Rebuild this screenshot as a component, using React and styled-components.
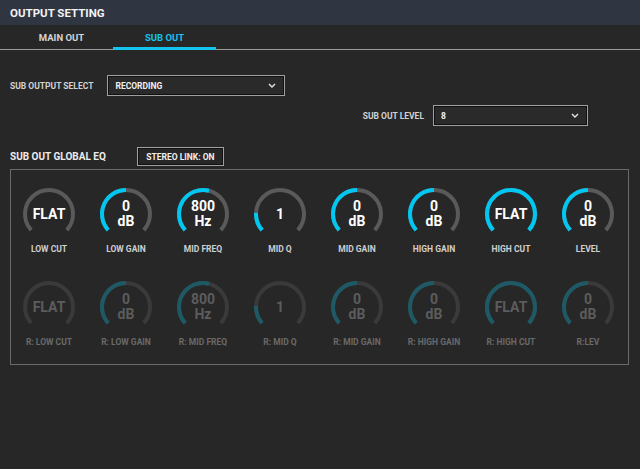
import React from 'react'
import styled, { createGlobalStyle } from 'styled-components'

const GlobalStyle = createGlobalStyle`
  html, body {
    margin: 0;
    padding: 0;
    background: #272727;
    font-family: "Roboto", "Liberation Sans", sans-serif;
    font-weight: bold;
    color: #e6e6e6;
  }
`

const row1 = [
  { label: 'LOW CUT', top: 'FLAT', value: 0 },
  { label: 'LOW GAIN', top: '0', bottom: 'dB', value: 0.5 },
  { label: 'MID FREQ', top: '800', bottom: 'Hz', value: 0.555 },
  { label: 'MID Q', top: '1', value: 0.17 },
  { label: 'MID GAIN', top: '0', bottom: 'dB', value: 0.5 },
  { label: 'HIGH GAIN', top: '0', bottom: 'dB', value: 0.5 },
  { label: 'HIGH CUT', top: 'FLAT', value: 1 },
  { label: 'LEVEL', top: '0', bottom: 'dB', value: 0.5 },
]

const row2 = [
  { label: 'R: LOW CUT', top: 'FLAT', value: 0 },
  { label: 'R: LOW GAIN', top: '0', bottom: 'dB', value: 0.5 },
  { label: 'R: MID FREQ', top: '800', bottom: 'Hz', value: 0.555 },
  { label: 'R: MID Q', top: '1', value: 0.17 },
  { label: 'R: MID GAIN', top: '0', bottom: 'dB', value: 0.5 },
  { label: 'R: HIGH GAIN', top: '0', bottom: 'dB', value: 0.5 },
  { label: 'R: HIGH CUT', top: 'FLAT', value: 1 },
  { label: 'R:LEV', top: '0', bottom: 'dB', value: 0.5 },
]

const polar = (cx, cy, r, deg) => {
  const a = (deg * Math.PI) / 180
  return [cx + r * Math.cos(a), cy + r * Math.sin(a)]
}

const arcPath = (cx, cy, r, from, to) => {
  const [x1, y1] = polar(cx, cy, r, from)
  const [x2, y2] = polar(cx, cy, r, to)
  const large = to - from > 180 ? 1 : 0
  return `M ${x1} ${y1} A ${r} ${r} 0 ${large} 1 ${x2} ${y2}`
}

const Arc = ({ value, dim }) => {
  const start = 138
  const end = 402
  const fillEnd = start + (end - start) * value
  return (
    <svg width="56" height="56" viewBox="0 0 56 56">
      <path d={arcPath(28, 28, 24, start, end)} fill="none" stroke={dim ? '#3a3a3a' : '#5a5a5a'} strokeWidth="4" />
      {value > 0 && (
        <path d={arcPath(28, 28, 24, start, fillEnd)} fill="none" stroke={dim ? '#1e5a66' : '#00c6f2'} strokeWidth="4" />
      )}
    </svg>
  )
}

const Knob = ({ label, top, bottom, value, dim }) => (
  <KnobCell>
    <Dial>
      <Arc value={value} dim={dim} />
      <DialText dim={dim}>
        <span>{top}</span>
        {bottom && <span>{bottom}</span>}
      </DialText>
    </Dial>
    <KnobLabel dim={dim}>{label}</KnobLabel>
  </KnobCell>
)

const Chevron = () => (
  <svg width="8" height="5" viewBox="0 0 8 5">
    <path d="M1 1 L4 4 L7 1" fill="none" stroke="#e6e6e6" strokeWidth="1.4" />
  </svg>
)

const App = () => {
  return (
    <>
      <GlobalStyle />
      <Page>
        <Header>OUTPUT SETTING</Header>
        <Tabs>
          <Tab>MAIN OUT</Tab>
          <Tab active>SUB OUT</Tab>
        </Tabs>
        <Content>
          <FieldRow>
            <FieldLabel>SUB OUTPUT SELECT</FieldLabel>
            <Select width={178}>
              <span>RECORDING</span>
              <Chevron />
            </Select>
          </FieldRow>
          <LevelRow>
            <FieldLabel>SUB OUT LEVEL</FieldLabel>
            <Select width={155}>
              <span>8</span>
              <Chevron />
            </Select>
          </LevelRow>
          <EqHead>
            <EqTitle>SUB OUT GLOBAL EQ</EqTitle>
            <LinkButton>STEREO LINK: ON</LinkButton>
          </EqHead>
          <Panel>
            <KnobRow>
              {row1.map((k) => <Knob key={k.label} {...k} />)}
            </KnobRow>
            <KnobRow>
              {row2.map((k) => <Knob key={k.label} {...k} dim />)}
            </KnobRow>
          </Panel>
        </Content>
      </Page>
    </>
  )
}

const Page = styled.div`
  width: 640px;
  height: 469px;
  background: #272727;
  overflow: hidden;
`

const Header = styled.div`
  height: 25px;
  background: #2f3541;
  color: #f2f2f2;
  font-size: 11.5px;
  display: flex;
  align-items: center;
  padding-left: 10px;
`

const Tabs = styled.div`
  display: flex;
  height: 24px;
  padding-left: 10px;
  border-bottom: 1px solid #9a9a9a;
`

const Tab = styled.div`
  width: 103px;
  display: flex;
  align-items: center;
  justify-content: center;
  font-size: 9.5px;
  color: ${({ active }) => (active ? '#14c3ee' : '#d4d4d4')};
  border-bottom: 3px solid ${({ active }) => (active ? '#14c3ee' : 'transparent')};
  margin-bottom: -1px;
  padding-top: 2px;
`

const Content = styled.div`
  padding: 25px 10px 0 10px;
`

const FieldRow = styled.div`
  display: flex;
  align-items: center;
  gap: 14px;
`

const LevelRow = styled.div`
  display: flex;
  align-items: center;
  justify-content: flex-end;
  gap: 9px;
  margin-top: 9px;
  padding-right: 42px;
`

const FieldLabel = styled.div`
  font-size: 8.5px;
  color: #d2d2d2;
`

const Select = styled.div`
  width: ${({ width }) => width}px;
  height: 21px;
  box-sizing: border-box;
  border: 1px solid #a0a0a0;
  box-shadow: inset 0 0 0 1px #111;
  background: #2a2a2a;
  display: flex;
  align-items: center;
  justify-content: space-between;
  padding: 0 8px 0 7px;
  font-size: 8.5px;
  color: #f0f0f0;
`

const EqHead = styled.div`
  display: flex;
  align-items: center;
  gap: 31px;
  margin-top: 21px;
  height: 19px;
`

const EqTitle = styled.div`
  font-size: 10px;
  color: #ececec;
`

const LinkButton = styled.div`
  width: 87px;
  height: 19px;
  box-sizing: border-box;
  border: 1px solid #a0a0a0;
  box-shadow: inset 0 0 0 1px #111;
  display: flex;
  align-items: center;
  justify-content: center;
  font-size: 8.5px;
  color: #f0f0f0;
`

const Panel = styled.div`
  margin-top: 3px;
  width: 619px;
  height: 196px;
  box-sizing: border-box;
  border: 1px solid #6a6a6a;
  padding: 16px 0 0 10px;
  display: flex;
  flex-direction: column;
  gap: 25px;
`

const KnobRow = styled.div`
  display: flex;
  gap: 21px;
`

const KnobCell = styled.div`
  width: 56px;
  display: flex;
  flex-direction: column;
  align-items: center;
`

const Dial = styled.div`
  position: relative;
  width: 56px;
  height: 56px;
  svg { display: block; }
`

const DialText = styled.div`
  position: absolute;
  inset: 0;
  display: flex;
  flex-direction: column;
  align-items: center;
  justify-content: center;
  font-size: 14px;
  line-height: 15px;
  color: ${({ dim }) => (dim ? '#5c5c5c' : '#ffffff')};
`

const KnobLabel = styled.div`
  margin-top: 2px;
  font-size: 8.5px;
  white-space: nowrap;
  color: ${({ dim }) => (dim ? '#6a6a6a' : '#cfcfcf')};
`

export default App
